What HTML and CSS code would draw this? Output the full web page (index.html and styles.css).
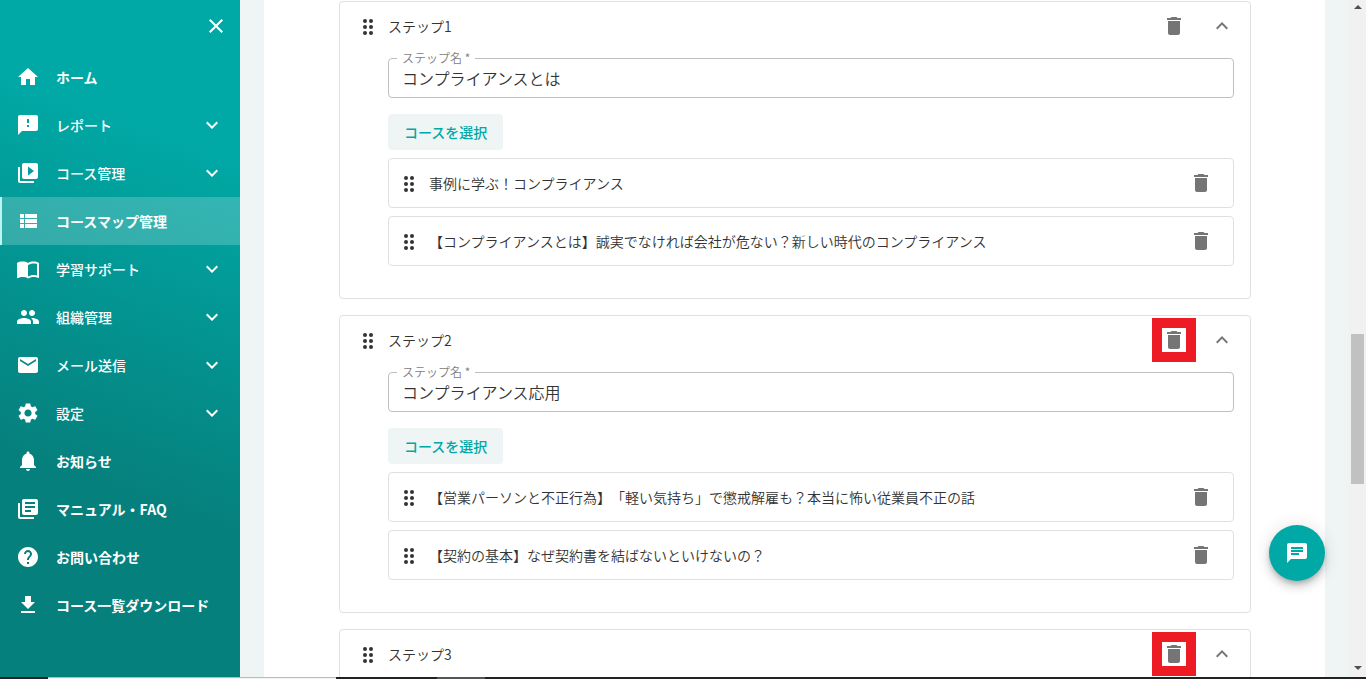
FILE: index.html
```html
<!DOCTYPE html>
<html lang="ja">
<head>
  <meta charset="UTF-8" />
  <meta name="viewport" content="width=device-width, initial-scale=1" />
  <title>コースマップ管理</title>
  <link rel="stylesheet" href="styles.css">
</head>
<body>
  <!-- Shared icons -->
  <svg class="sprite" aria-hidden="true">
    <symbol id="trash" viewBox="0 0 24 24"><path d="M6 19c0 1.100.9 2 2 2h8c1.100 0 2-.9 2-2V7H6v12zM19 4h-3.500l-1-1h-5l-1 1H5v2h14V4z"/></symbol>
    <symbol id="down" viewBox="0 0 24 24"><path d="M7.410 8.590 12 13.170l4.590-4.580L18 10l-6 6-6-6z"/></symbol>
    <symbol id="up" viewBox="0 0 24 24"><path d="M12 8l-6 6 1.410 1.410L12 10.830l4.590 4.580L18 14z"/></symbol>
    <symbol id="drag" viewBox="0 0 24 24">
      <circle cx="9" cy="7" r="2"/><circle cx="15" cy="7" r="2"/>
      <circle cx="9" cy="13" r="2"/><circle cx="15" cy="13" r="2"/>
      <circle cx="9" cy="19" r="2"/><circle cx="15" cy="19" r="2"/>
    </symbol>
  </svg>

  <div class="app">
    <!-- Sidebar -->
    <nav class="sidebar" aria-label="メインメニュー">
      <div class="sidebar-top">
        <button class="icon-btn" type="button" aria-label="閉じる">
          <svg viewBox="0 0 24 24"><path d="M19 6.410 17.590 5 12 10.590 6.410 5 5 6.410 10.590 12 5 17.590 6.410 19 12 13.410 17.590 19 19 17.590 13.410 12z"/></svg>
        </button>
      </div>
      <ul class="menu">
        <li><a href="#">
          <svg viewBox="0 0 24 24"><path d="M10 20v-6h4v6h5v-8h3L12 3 2 12h3v8z"/></svg>
          <span>ホーム</span>
        </a></li>
        <li><a href="#" class="group">
          <svg viewBox="0 0 24 24"><path d="M20 2H4c-1.100 0-1.990.9-1.990 2L2 22l4-4h14c1.100 0 2-.9 2-2V4c0-1.100-.9-2-2-2zm-7 12h-2v-2h2v2zm0-4h-2V6h2v4z"/></svg>
          <span>レポート</span>
          <svg><use href="#down"/></svg>
        </a></li>
        <li><a href="#" class="group">
          <svg viewBox="0 0 24 24"><path d="M4 6H2v14c0 1.100.9 2 2 2h14v-2H4V6zm16-4H8c-1.100 0-2 .9-2 2v12c0 1.100.9 2 2 2h12c1.100 0 2-.9 2-2V4c0-1.100-.9-2-2-2zm-8 12.500v-9l6 4.500-6 4.500z"/></svg>
          <span>コース管理</span>
          <svg><use href="#down"/></svg>
        </a></li>
        <li><a href="#" class="active" aria-current="page">
          <svg viewBox="0 0 24 24"><path d="M4 14h4v-4H4v4zm0 5h4v-4H4v4zM4 9h4V5H4v4zm5 5h12v-4H9v4zm0 5h12v-4H9v4zM9 5v4h12V5H9z"/></svg>
          <span>コースマップ管理</span>
        </a></li>
        <li><a href="#" class="group">
          <svg viewBox="0 0 24 24"><path d="M21 5c-1.110-.35-2.330-.5-3.500-.5-1.950 0-4.050.4-5.500 1.500-1.450-1.100-3.550-1.500-5.500-1.500S2.450 4.900 1 6v14.650c0 .25.25.5.5.5.1 0 .15-.05.25-.05C3.100 20.450 5.050 20 6.500 20c1.950 0 4.050.4 5.500 1.500 1.350-.85 3.800-1.500 5.500-1.500 1.650 0 3.350.3 4.750 1.050.1.050.15.050.25.050.25 0 .5-.25.5-.5V6c-.6-.45-1.250-.75-2-1zm0 13.500c-1.100-.35-2.300-.5-3.500-.5-1.700 0-4.150.65-5.500 1.500V8c1.350-.85 3.800-1.500 5.500-1.500 1.200 0 2.400.15 3.500.5v11.500z"/></svg>
          <span>学習サポート</span>
          <svg><use href="#down"/></svg>
        </a></li>
        <li><a href="#" class="group">
          <svg viewBox="0 0 24 24"><path d="M16 11c1.660 0 2.990-1.340 2.990-3S17.660 5 16 5s-3 1.340-3 3 1.340 3 3 3zm-8 0c1.660 0 2.990-1.340 2.990-3S9.660 5 8 5 5 6.340 5 8s1.340 3 3 3zm0 2c-2.330 0-7 1.170-7 3.500V19h14v-2.500c0-2.330-4.670-3.500-7-3.500zm8 0c-.29 0-.62.02-.97.05 1.160.84 1.970 1.970 1.970 3.450V19h6v-2.500c0-2.330-4.670-3.500-7-3.500z"/></svg>
          <span>組織管理</span>
          <svg><use href="#down"/></svg>
        </a></li>
        <li><a href="#" class="group">
          <svg viewBox="0 0 24 24"><path d="M20 4H4c-1.100 0-1.990.9-1.990 2L2 18c0 1.100.9 2 2 2h16c1.100 0 2-.9 2-2V6c0-1.100-.9-2-2-2zm0 4-8 5-8-5V6l8 5 8-5v2z"/></svg>
          <span>メール送信</span>
          <svg><use href="#down"/></svg>
        </a></li>
        <li><a href="#" class="group">
          <svg viewBox="0 0 24 24"><path d="M19.140 12.940c.04-.3.06-.61.06-.94 0-.32-.02-.64-.07-.94l2.030-1.580c.18-.14.23-.41.12-.61l-1.920-3.320c-.12-.22-.37-.29-.59-.22l-2.390.96c-.5-.38-1.030-.7-1.620-.94l-.36-2.540c-.04-.24-.24-.41-.48-.41h-3.840c-.24 0-.43.17-.47.41l-.36 2.540c-.59.24-1.130.57-1.620.94l-2.390-.96c-.22-.08-.47 0-.59.22L2.740 8.870c-.12.21-.08.47.12.61l2.030 1.580c-.05.3-.09.63-.09.94s.02.64.07.94l-2.030 1.580c-.18.14-.23.41-.12.61l1.920 3.320c.12.22.37.29.59.22l2.390-.96c.5.38 1.030.7 1.620.94l.36 2.540c.05.24.24.41.48.41h3.840c.24 0 .44-.17.47-.41l.36-2.540c.59-.24 1.130-.56 1.620-.94l2.390.96c.22.08.47 0 .59-.22l1.920-3.320c.12-.22.07-.47-.12-.61l-2.010-1.580zM12 15.600c-1.980 0-3.600-1.620-3.600-3.600s1.620-3.600 3.600-3.600 3.600 1.620 3.600 3.600-1.620 3.600-3.600 3.600z"/></svg>
          <span>設定</span>
          <svg><use href="#down"/></svg>
        </a></li>
        <li><a href="#">
          <svg viewBox="0 0 24 24"><path d="M12 22c1.100 0 2-.9 2-2h-4c0 1.100.89 2 2 2zm6-6v-5c0-3.070-1.640-5.640-4.500-6.320V4c0-.83-.67-1.500-1.500-1.500s-1.500.67-1.500 1.500v.68C7.630 5.360 6 7.920 6 11v5l-2 2v1h16v-1l-2-2z"/></svg>
          <span>お知らせ</span>
        </a></li>
        <li><a href="#">
          <svg viewBox="0 0 24 24"><path d="M4 6H2v14c0 1.100.9 2 2 2h14v-2H4V6zm16-4H8c-1.100 0-2 .9-2 2v12c0 1.100.9 2 2 2h12c1.100 0 2-.9 2-2V4c0-1.100-.9-2-2-2zm-1 9H9V9h10v2zm-4 4H9v-2h6v2zm4-8H9V5h10v2z"/></svg>
          <span>マニュアル・FAQ</span>
        </a></li>
        <li><a href="#">
          <svg viewBox="0 0 24 24"><path d="M12 2C6.480 2 2 6.480 2 12s4.480 10 10 10 10-4.480 10-10S17.520 2 12 2zm1 17h-2v-2h2v2zm2.070-7.750-.9.920C13.450 12.900 13 13.500 13 15h-2v-.5c0-1.100.45-2.100 1.170-2.830l1.240-1.260c.37-.36.59-.86.59-1.410 0-1.100-.9-2-2-2s-2 .9-2 2H8c0-2.210 1.790-4 4-4s4 1.790 4 4c0 .88-.36 1.680-.93 2.250z"/></svg>
          <span>お問い合わせ</span>
        </a></li>
        <li><a href="#">
          <svg viewBox="0 0 24 24"><path d="M19 9h-4V3H9v6H5l7 7 7-7zM5 18v2h14v-2H5z"/></svg>
          <span>コース一覧ダウンロード</span>
        </a></li>
      </ul>
    </nav>

    <!-- Steps -->
    <main class="main">
      <div class="panel">
        <section class="step">
          <header class="step-head">
            <svg class="drag"><use href="#drag"/></svg>
            <h2>ステップ1</h2>
            <button class="icon-btn" type="button" aria-label="ステップ1を削除"><svg><use href="#trash"/></svg></button>
            <button class="icon-btn" type="button" aria-label="ステップ1を折りたたむ"><svg><use href="#up"/></svg></button>
          </header>
          <div class="step-body">
            <div class="field">
              <label for="step1">ステップ名 *</label>
              <input id="step1" type="text" value="コンプライアンスとは" required>
            </div>
            <button class="select-btn" type="button">コースを選択</button>
            <ul class="courses">
              <li>
                <svg class="drag"><use href="#drag"/></svg>
                <span>事例に学ぶ！コンプライアンス</span>
                <button class="icon-btn" type="button" aria-label="コースを削除"><svg><use href="#trash"/></svg></button>
              </li>
              <li>
                <svg class="drag"><use href="#drag"/></svg>
                <span>【コンプライアンスとは】誠実でなければ会社が危ない？新しい時代のコンプライアンス</span>
                <button class="icon-btn" type="button" aria-label="コースを削除"><svg><use href="#trash"/></svg></button>
              </li>
            </ul>
          </div>
        </section>

        <section class="step">
          <header class="step-head">
            <svg class="drag"><use href="#drag"/></svg>
            <h2>ステップ2</h2>
            <button class="icon-btn marked" type="button" aria-label="ステップ2を削除"><svg><use href="#trash"/></svg></button>
            <button class="icon-btn" type="button" aria-label="ステップ2を折りたたむ"><svg><use href="#up"/></svg></button>
          </header>
          <div class="step-body">
            <div class="field">
              <label for="step2">ステップ名 *</label>
              <input id="step2" type="text" value="コンプライアンス応用" required>
            </div>
            <button class="select-btn" type="button">コースを選択</button>
            <ul class="courses">
              <li>
                <svg class="drag"><use href="#drag"/></svg>
                <span>【営業パーソンと不正行為】「軽い気持ち」で懲戒解雇も？本当に怖い従業員不正の話</span>
                <button class="icon-btn" type="button" aria-label="コースを削除"><svg><use href="#trash"/></svg></button>
              </li>
              <li>
                <svg class="drag"><use href="#drag"/></svg>
                <span>【契約の基本】なぜ契約書を結ばないといけないの？</span>
                <button class="icon-btn" type="button" aria-label="コースを削除"><svg><use href="#trash"/></svg></button>
              </li>
            </ul>
          </div>
        </section>

        <section class="step">
          <header class="step-head">
            <svg class="drag"><use href="#drag"/></svg>
            <h2>ステップ3</h2>
            <button class="icon-btn marked" type="button" aria-label="ステップ3を削除"><svg><use href="#trash"/></svg></button>
            <button class="icon-btn" type="button" aria-label="ステップ3を折りたたむ"><svg><use href="#up"/></svg></button>
          </header>
          <div class="step-body"></div>
        </section>
      </div>
    </main>

    <!-- Scrollbar -->
    <div class="scrollbar" aria-hidden="true">
      <svg viewBox="0 0 17 17"><path d="M5 9l4-4 4 4z"/></svg>
      <div class="track"><div class="thumb"></div></div>
      <svg viewBox="0 0 17 17"><path d="M5 6l4 4 4-4z"/></svg>
    </div>
  </div>

  <div class="taskbar" aria-hidden="true">
    <span class="start"></span><span class="search"></span><span class="tasks"></span><span class="open"></span>
  </div>

  <button class="chat" type="button" aria-label="チャット">
    <svg viewBox="0 0 24 24"><path d="M20 2H4c-1.100 0-1.990.9-1.990 2L2 22l4-4h14c1.100 0 2-.9 2-2V4c0-1.100-.9-2-2-2zM6 9h12v2H6V9zm8 5H6v-2h8v2zm4-6H6V6h12v2z"/></svg>
  </button>
</body>
</html>
```
FILE: styles.css
```css
* {
  margin: 0;
  padding: 0;
  box-sizing: border-box;
}
body {
  display: flex;
  flex-direction: column;
  height: 100vh;
  overflow: hidden;
  background: #eff5f5;
  color: #333;
  font-family: "Noto Sans CJK JP", sans-serif;
  font-size: 14px;
  font-weight: 350;
  line-height: 20px;
  text-spacing-trim: space-all;
}
button, input {
  font: inherit;
  color: inherit;
}
button {
  border: 0;
  background: none;
  cursor: pointer;
}
ul {
  list-style: none;
}
svg {
  display: block;
  flex: none;
  width: 24px;
  height: 24px;
  fill: currentColor;
}
.sprite {
  display: none;
}
.app {
  display: flex;
  flex: 1;
  min-height: 0;
}

/* Sidebar */
.sidebar {
  flex: none;
  width: 240px;
  background: linear-gradient(200deg, #00a9a6 20%, #06807d 70%);
  color: #fff;
}
.sidebar-top {
  display: flex;
  justify-content: flex-end;
  padding: 14px 12px 15px;
}
.menu a {
  display: flex;
  align-items: center;
  gap: 16px;
  height: 48px;
  padding: 0 16px;
  color: #fff;
  font-weight: 700;
  text-decoration: none;
}
.menu .group {
  font-weight: 500;
}
.menu span {
  flex: 1;
}
.menu .active {
  background: rgba(255, 255, 255, 0.2);
  box-shadow: inset 2px 0 #b9f5f2;
}

/* Main */
.main {
  flex: 1;
  min-width: 0;
  padding: 0 24px;
  overflow: hidden;
}
.panel {
  padding: 1px 74px 0 75px;
  background: #fff;
}
.step {
  margin-bottom: 16px;
  border: 1px solid #e0e0e0;
  border-radius: 4px;
}
.step-head {
  display: flex;
  align-items: center;
  height: 48px;
  padding: 0 16px;
  gap: 24px;
}
.step-head h2 {
  flex: 1;
  margin-left: -16px;
  font-size: 14px;
  font-weight: 350;
}
.icon-btn {
  flex: none;
  color: #757575;
}
.sidebar .icon-btn {
  color: #fff;
}
.icon-btn.marked {
  outline: 10px solid #ed1c24;
}
.step-body {
  padding: 8px 16px 32px 48px;
}
.field {
  position: relative;
}
.field label {
  position: absolute;
  top: -10px;
  left: 9px;
  padding: 0 5px;
  background: #fff;
  color: #808080;
  font-size: 12px;
}
.field input {
  display: block;
  width: 100%;
  height: 40px;
  padding: 0 13px;
  border: 1px solid #c0c0c0;
  border-radius: 4px;
  background: #fff;
  font-size: 16px;
}
.select-btn {
  display: block;
  height: 36px;
  margin: 16px 0 8px;
  padding: 0 16px;
  border-radius: 4px;
  background: #eff5f5;
  color: #00a9a6;
  font-weight: 500;
}
.courses {
  display: grid;
  gap: 8px;
}
.courses li {
  display: flex;
  align-items: center;
  gap: 8px;
  height: 50px;
  padding: 0 20px 0 8px;
  border: 1px solid #e0e0e0;
  border-radius: 4px;
}
.courses span {
  flex: 1;
}

/* Scrollbar */
.scrollbar {
  display: flex;
  flex: none;
  flex-direction: column;
  width: 17px;
  background: #f1f1f1;
  color: #505050;
}
.scrollbar svg {
  width: 17px;
  height: 17px;
}
.track {
  flex: 1;
  padding: 317px 2px 0;
}
.thumb {
  height: 150px;
  background: #c1c1c1;
}

/* Bottom strip */
.taskbar {
  display: flex;
  height: 2px;
  background: #222;
}
.start {
  width: 48px;
}
.search {
  width: 288px;
  border-top: 1px solid #bbb;
  background: #f3f3f3;
}
.tasks {
  width: 101px;
}
.open {
  width: 48px;
  background: #555;
}

/* Chat button */
.chat {
  position: fixed;
  right: 41px;
  bottom: 98px;
  display: flex;
  align-items: center;
  justify-content: center;
  width: 56px;
  height: 56px;
  border-radius: 50%;
  background: #00a9a6;
  color: #fff;
  box-shadow: 0 3px 5px -1px rgba(0, 0, 0, 0.2), 0 6px 10px rgba(0, 0, 0, 0.14), 0 1px 18px rgba(0, 0, 0, 0.12);
}
```
